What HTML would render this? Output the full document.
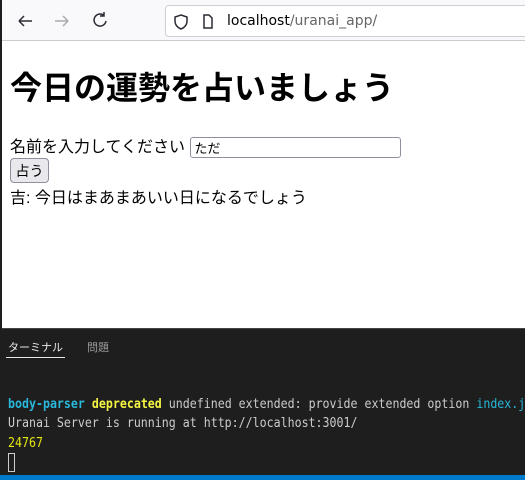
<!DOCTYPE html>
<html><head><meta charset="utf-8"><style>
*{margin:0;padding:0;box-sizing:border-box}
body{width:525px;height:480px;overflow:hidden;background:#1e1e1e;font-family:"Liberation Sans","Noto Sans CJK JP",sans-serif;position:relative}
#bar{position:absolute;left:0;top:0;width:525px;height:41px;background:#f9f9fb;border-bottom:1px solid #ccc}
#lb{position:absolute;left:0;top:0;width:2px;height:330px;background:#1e1e1e;z-index:5}
#url{position:absolute;left:165px;top:5px;width:370px;height:32px;background:#fff;border:1px solid #cfcfd8;border-radius:4px}
#url span{position:absolute;left:61px;top:7px;color:#15141a;font-family:"DejaVu Sans",sans-serif;font-size:14px}
#page{position:absolute;left:0;top:41px;width:525px;height:287px;background:#fff;padding-left:10px;color:#000}
h1{font-size:32px;font-weight:bold;position:absolute;left:10px;top:22px;white-space:nowrap}
.l{position:absolute;left:10px;font-size:16px;white-space:nowrap}
input{font-family:inherit;font-size:13px;width:211px;height:21px;border:1px solid #8f8f9d;border-radius:3px;padding:0 4px;vertical-align:middle}
button{position:absolute;left:10px;top:117px;width:39px;height:25px;font-size:14px;font-family:inherit;border:1px solid #8f8f9d;border-radius:4px;background:#e9e9ed}
.t{position:absolute;font-family:"DejaVu Sans Mono","Liberation Mono",monospace;font-size:13.5px;color:#ccc;white-space:nowrap;transform:scaleX(.86);transform-origin:0 0}
</style></head><body>
<div id="lb"></div>
<div id="bar">
<svg width="140" height="40" style="position:absolute;left:0;top:0" fill="none" stroke="#2b2a33" stroke-width="1.5">
<path d="M19 21h13M19 21l5-5M19 21l5 5"/>
<path d="M55 21h13M68 21l-5-5M68 21l-5 5" stroke="#aaa"/>
<path d="M104 15.5a6 6 0 1 0 2 5.5M104 12v4h-4"/>
</svg>
<div id="url">
<svg width="55" height="30" style="position:absolute;left:0;top:0" fill="none" stroke="#2b2a33" stroke-width="1.5">
<path d="M15 9l6 2v4c0 4-3 7-6 8c-3-1-6-4-6-8v-4z"/>
<path d="M38 9h5l3 3v10h-8z"/>
</svg>
<span><b style="font-weight:normal;color:#000">localhost</b><span style="position:static;color:#666">/uranai_app/</span></span>
</div>
</div>
<div id="page">
<h1>今日の運勢を占いましょう</h1>
<div class="l" style="top:92px">名前を入力してください <input value="ただ"></div>
<button>占う</button>
<div class="l" style="top:143px">吉: 今日はまあまあいい日になるでしょう</div>
</div>
<div style="position:absolute;left:0;top:328px;width:525px;height:1px;background:#444"></div>
<div style="position:absolute;left:8px;top:339px;font-size:11px;color:#e7e7e7">ターミナル</div>
<div style="position:absolute;left:6px;top:357px;width:59px;height:1px;background:#e7e7e7"></div>
<div style="position:absolute;left:87px;top:339px;font-size:11px;color:#999">問題</div>
<div class="t" style="left:8px;top:396px"><b style="color:#29b8db">body-parser</b> <b style="color:#f5f543">deprecated</b> undefined extended: provide extended option <span style="color:#29b8db">index.js</span></div>
<div class="t" style="left:8px;top:415px">Uranai Server is running at http://localhost:3001/</div>
<div class="t" style="left:8px;top:435px;color:#e5e510">24767</div>
<div style="position:absolute;left:8px;top:453px;width:7px;height:19px;border:1px solid #ccc"></div>
<div style="position:absolute;left:0;top:475px;width:525px;height:5px;background:#007acc"></div>
</body></html>
